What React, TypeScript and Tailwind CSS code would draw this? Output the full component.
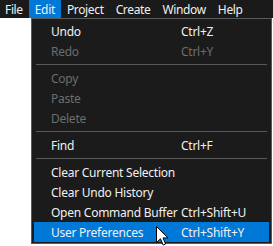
import React from 'react';

type Item =
  | { sep: true }
  | { label: string; shortcut?: string; disabled?: boolean; active?: boolean; sep?: false };

const items: Item[] = [
  { label: 'Undo', shortcut: 'Ctrl+Z' },
  { label: 'Redo', shortcut: 'Ctrl+Y', disabled: true },
  { sep: true },
  { label: 'Copy', disabled: true },
  { label: 'Paste', disabled: true },
  { label: 'Delete', disabled: true },
  { sep: true },
  { label: 'Find', shortcut: 'Ctrl+F' },
  { sep: true },
  { label: 'Clear Current Selection' },
  { label: 'Clear Undo History' },
  { label: 'Open Command Buffer', shortcut: 'Ctrl+Shift+U' },
  { label: 'User Preferences', shortcut: 'Ctrl+Shift+Y', active: true },
];

const menus = ['File', 'Edit', 'Project', 'Create', 'Window', 'Help'];

function Cursor() {
  return (
    <svg className="absolute left-[156px] top-[226px]" width="13" height="20" viewBox="0 0 13 20">
      <path
        d="M0.5 0.5 L0.5 16.5 L4.5 12.8 L7.2 19 L9.6 18 L7 11.9 L12 11.9 Z"
        fill="#ffffff"
        stroke="#000000"
        strokeWidth="1"
        strokeLinejoin="miter"
      />
    </svg>
  );
}

export default function App() {
  return (
    <div
      className="relative w-[273px] h-[246px] bg-white overflow-hidden text-[12px] leading-none tracking-[-0.25px]"
      style={{ fontFamily: '"Noto Sans", sans-serif' }}
    >
      <div className="flex h-[18px] bg-[#1a1a1a] text-[#f0f0f0] tracking-[-0.35px]">
        {menus.map((m, i) => (
          <div
            key={m}
            className={`flex items-center pt-[1px] px-[6px] ${i === 0 ? 'pl-[5px]' : ''} ${
              m === 'Edit' ? 'bg-[#0078d7]' : ''
            }`}
          >
            {m}
          </div>
        ))}
      </div>
      <div className="ml-[31px] w-[241px] border border-[#5a5a5a] bg-[#1b1b1b] px-[2px] pt-[2px] pb-[1px]">
        {items.map((it, i) =>
          it.sep ? (
            <div key={i} className="h-[7px] flex items-center px-[2px]">
              <div className="h-px w-full bg-[#5a5a5a]" />
            </div>
          ) : (
            <div
              key={i}
              className={`flex items-center h-[20px] pl-[17px] pt-[1px] ${
                it.active ? 'bg-[#0078d7]' : ''
              } ${it.disabled ? 'text-[#6d6d6d]' : 'text-[#f0f0f0]'}`}
            >
              <span className="w-[130px] shrink-0 whitespace-nowrap">{it.label}</span>
              <span className="whitespace-nowrap">{it.shortcut}</span>
            </div>
          )
        )}
      </div>
      <Cursor />
    </div>
  );
}
